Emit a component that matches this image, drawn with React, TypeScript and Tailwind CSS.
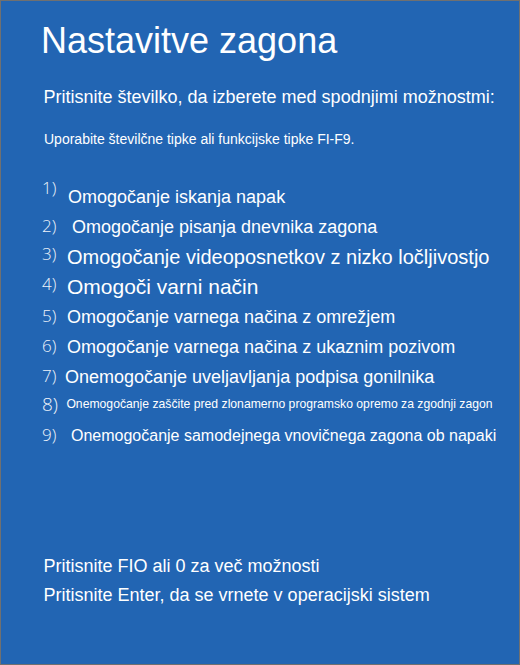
import React from "react";

type BootOption = {
  num: string;
  label: string;
  // row height, label size/offsets tuned per line
  rowH: string;
  numSize: string;
  textSize: string;
  textMt: string;
  textMl: string;
};

const options: BootOption[] = [
  { num: "1)", label: "Omogočanje iskanja napak", rowH: "h-[37.5px]", numSize: "text-[17px]", textSize: "text-[18px]", textMt: "mt-[9px]", textMl: "ml-[3px]" },
  { num: "2)", label: "Omogočanje pisanja dnevnika zagona", rowH: "h-[28.5px]", numSize: "text-[17px]", textSize: "text-[18px]", textMt: "mt-[1px]", textMl: "ml-[7px]" },
  { num: "3)", label: "Omogočanje videoposnetkov z nizko ločljivostjo", rowH: "h-[30px]", numSize: "text-[17px]", textSize: "text-[20px]", textMt: "mt-[1.5px]", textMl: "ml-[2px]" },
  { num: "4)", label: "Omogoči varni način", rowH: "h-[32px]", numSize: "text-[17px]", textSize: "text-[21px]", textMt: "mt-[1px]", textMl: "ml-[2px]" },
  { num: "5)", label: "Omogočanje varnega načina z omrežjem", rowH: "h-[30px]", numSize: "text-[17px]", textSize: "text-[18px]", textMt: "mt-[1px]", textMl: "ml-[2px]" },
  { num: "6)", label: "Omogočanje varnega načina z ukaznim pozivom", rowH: "h-[30px]", numSize: "text-[17px]", textSize: "text-[18px]", textMt: "mt-[0.5px]", textMl: "ml-[2px]" },
  { num: "7)", label: "Onemogočanje uveljavljanja podpisa gonilnika", rowH: "h-[27.5px]", numSize: "text-[17px]", textSize: "text-[18px]", textMt: "mt-[0.5px]", textMl: "ml-0" },
  { num: "8)", label: "Onemogočanje zaščite pred zlonamerno programsko opremo za zgodnji zagon", rowH: "h-[31px]", numSize: "text-[19px]", textSize: "text-[12.2px]", textMt: "mt-[3.5px]", textMl: "ml-[1.4px]" },
  { num: "9)", label: "Onemogočanje samodejnega vnovičnega zagona ob napaki", rowH: "h-[30px]", numSize: "text-[17px]", textSize: "text-[16px]", textMt: "mt-[2.5px]", textMl: "ml-[6px]" },
];

export default function App() {
  return (
    <div className="w-[520px] h-[665px] border border-[#707070] bg-[#2265b3] text-white font-['Liberation_Sans',Arial,sans-serif] flex flex-col">
      <h1 className="ml-[40px] mt-[22px] text-[36px] leading-none font-normal">Nastavitve zagona</h1>

      <p className="ml-[42.5px] mt-[28.5px] text-[18px] leading-none">
        Pritisnite številko, da izberete med spodnjimi možnostmi:
      </p>
      <p className="ml-[43px] mt-[26px] text-[14px] leading-none">
        Uporabite številčne tipke ali funkcijske tipke FI-F9.
      </p>

      <ul className="mt-[33.5px] ml-[41px] flex flex-col">
        {options.map((o) => (
          <li key={o.num} className={`flex items-start ${o.rowH}`}>
            <span className={`w-[23px] shrink-0 leading-none font-light font-['Open_Sans',sans-serif] text-[#eef3fa] ${o.numSize}`}>
              {o.num}
            </span>
            <span className={`leading-none whitespace-nowrap ${o.textSize} ${o.textMt} ${o.textMl}`}>{o.label}</span>
          </li>
        ))}
      </ul>

      <div className="ml-[42.5px] mt-[101.5px] flex flex-col gap-[10.5px] text-[18px] leading-none">
        <p>Pritisnite FIO ali 0 za več možnosti</p>
        <p>Pritisnite Enter, da se vrnete v operacijski sistem</p>
      </div>
    </div>
  );
}
